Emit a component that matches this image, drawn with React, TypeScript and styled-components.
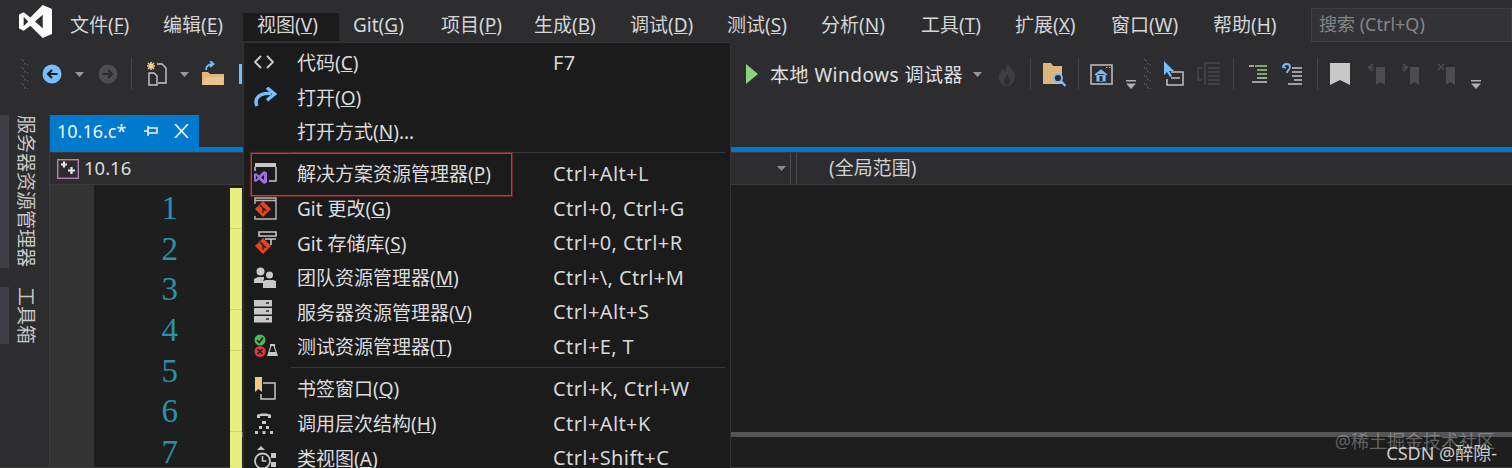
import React from 'react';
import styled, {createGlobalStyle} from 'styled-components';

const GlobalStyle = createGlobalStyle`
  html, body {
    margin: 0;
    padding: 0;
    background: #2d2d30;
  }
`

const Page = styled.div`
  width: 1512px;
  height: 468px;
  position: relative;
  overflow: hidden;
  display: flex;
  flex-direction: column;
  background: #2d2d30;
  color: #dcdcdc;
  font-family: "Noto Sans", "Noto Sans CJK SC", sans-serif;
  font-size: 19px;
`

const MenuBar = styled.div`
  height: 42px;
  flex: none;
  display: flex;
  align-items: center;
  padding-left: 19px;
`
const Logo = styled.svg`
  width: 33px;
  height: 33px;
  margin-right: 4px;
`
const TopItem = styled.div<{ $w: number; $active?: boolean }>`
  width: ${p => p.$w}px;
  height: 28px;
  margin-top: 12px;
  padding-left: 14px;
  box-sizing: border-box;
  line-height: 24px;
  white-space: nowrap;
  color: #d6d6d6;
  background: ${p => (p.$active ? '#1b1b1c' : 'transparent')};
`
const SearchBox = styled.div`
  width: 201px;
  height: 34px;
  margin: 8px 0 0 auto;
  padding-left: 7px;
  box-sizing: border-box;
  background: #333337;
  border: 1px solid #3f3f43;
  color: #858585;
  font-size: 18px;
  line-height: 31px;
  white-space: nowrap;
`

const Toolbar = styled.div`
  height: 73px;
  flex: none;
  display: flex;
  align-items: flex-start;
  padding: 8px 0 0 20px;
  box-sizing: border-box;
`
const Tool = styled.div<{ $ml?: number; $w: number }>`
  flex: none;
  height: 48px;
  width: ${p => p.$w}px;
  margin-left: ${p => p.$ml ?? 0}px;
  display: flex;
  align-items: center;
  justify-content: center;
  white-space: nowrap;
`
const OverflowTool = styled(Tool)`
  align-items: flex-end;
  padding-bottom: 9px;
  box-sizing: border-box;
`
const ToolSep = styled.div<{ $ml: number }>`
  flex: none;
  width: 1px;
  height: 32px;
  margin: 8px 0 0 ${p => p.$ml}px;
  background: #46464a;
`
const RunLabel = styled(Tool)`
  justify-content: flex-start;
  color: #e0e0e0;
  letter-spacing: .5px;
`
const CutOffBar = styled.div`
  width: 3px;
  height: 20px;
  background: #75beff;
`

const Body = styled.div`
  flex: 1;
  min-height: 0;
  display: flex;
  border-bottom: 1px solid #3c3c3c;
`
const Rail = styled.div`
  width: 50px;
  flex: none;
  display: flex;
  flex-direction: column;
  align-items: flex-start;
  gap: 19px;
  border-right: 1px solid #3a3a3d;
  box-sizing: border-box;
`
const RailTab = styled.div<{ $h: number }>`
  height: ${p => p.$h}px;
  width: 21px;
  border-left: 9px solid #3f3f46;
  padding-left: 6px;
  font-size: 19px;
  line-height: 21px;
  writing-mode: vertical-rl;
  text-orientation: sideways;
  color: #c8c8c8;
  white-space: nowrap;
`

const Main = styled.div`
  flex: 1;
  min-width: 0;
  display: flex;
  flex-direction: column;
`
const TabStrip = styled.div`
  height: 37px;
  flex: none;
  display: flex;
  flex-direction: column;
`
const DocTab = styled.div`
  width: 149px;
  height: 32px;
  flex: none;
  background: #007acc;
  display: flex;
  align-items: center;
  padding-left: 7px;
  box-sizing: border-box;
  color: #f0f6fb;
  font-size: 18px;
`
const DocTabIcons = styled.div`
  display: flex;
  align-items: center;
  gap: 16px;
  margin-left: 18px;
`
const BlueLine = styled.div`
  height: 5px;
  flex: none;
  background: #007acc;
`
const NavRow = styled.div`
  height: 33px;
  flex: none;
  display: flex;
  border-top: 1px solid #3a3a3d;
  border-bottom: 1px solid #3a3a3d;
  box-sizing: border-box;
`
const NavCell = styled.div<{ $w?: number }>`
  ${p => (p.$w ? `width: ${p.$w}px;` : 'flex: 1;')}
  flex-shrink: 0;
  display: flex;
  align-items: center;
  box-sizing: border-box;
`
const NavMember = styled(NavCell)`
  padding-left: 7px;
  gap: 5px;
  border-right: 1px solid #4a4a4d;
`
const NavScope = styled(NavCell)`
  margin-left: 5px;
  padding: 0 0 3px 32px;
  border-left: 1px solid #4a4a4d;
  color: #d0d0d0;
`
const NavName = styled.span`
  font-size: 18.5px;
  padding-bottom: 2px;
`
const NavCaret = styled.div`
  margin-left: auto;
  margin-right: 4px;
  display: flex;
`

const Editor = styled.div`
  flex: 1;
  min-height: 0;
  display: flex;
  background: #1e1e1e;
`
const Margin = styled.div`
  width: 44px;
  flex: none;
  background: #333333;
`
const Lines = styled.div`
  width: 148px;
  flex: none;
  padding-top: 3px;
`
const LineRow = styled.div`
  height: 40.7px;
  display: grid;
  grid-template-columns: 136px 12px;
`
const LineNo = styled.div`
  padding-right: 52px;
  text-align: right;
  font-family: "Liberation Serif", serif;
  font-size: 33px;
  line-height: 41px;
  color: #2b91af;
`
const Changed = styled.div`
  background: #e6ee7d;
  border-bottom: 1px solid #cdd46e;
`
const CodeArea = styled.div`
  flex: 1;
  padding-top: 247px;
`
const HScroll = styled.div`
  height: 5px;
  background: #555558;
`

const Dropdown = styled.div`
  position: absolute;
  left: 243px;
  top: 42px;
  width: 488px;
  height: 440px;
  padding-top: 2px;
  box-sizing: border-box;
  background: #1b1b1c;
  border-left: 1px solid #333337;
  border-right: 1px solid #333337;
  border-top: 1px solid #333337;
`
const MenuRow = styled.div`
  position: relative;
  height: 34.6px;
  display: flex;
  align-items: center;
  white-space: nowrap;
  color: #dcdcdc;
`
const RowIcon = styled.div`
  width: 53px;
  flex: none;
  display: flex;
  justify-content: flex-start;
  padding-left: 10px;
  box-sizing: border-box;
`
const RowLabel = styled.div`
  width: 256px;
  flex: none;
`
const RowKeys = styled.div`
  color: #d8d8d8;
  font-size: 20px;
  letter-spacing: .4px;
`
const MenuSep = styled.div`
  height: 1px;
  margin: 3px 5px 3.4px 47px;
  background: #3a3a3c;
`
const RedBox = styled.div`
  position: absolute;
  left: 7px;
  top: -3px;
  width: 261px;
  height: 43px;
  border: 1px solid #c83a3a;
  box-shadow: 0 0 1px 1px rgba(170, 40, 40, .55);
  box-sizing: border-box;
`
const Watermark = styled.div<{ $right: number; $top: number; $strong?: boolean }>`
  position: absolute;
  right: ${p => p.$right}px;
  top: ${p => p.$top}px;
  white-space: nowrap;
  font-size: 18px;
  line-height: 24px;
  color: ${p => (p.$strong ? 'rgba(235,235,235,.85)' : 'rgba(200,200,200,.42)')};
`

const Caret = ({color = '#9a9a9a'}: { color?: string }) => (
    <svg width="9" height="5" viewBox="0 0 9 5"><path d="M0 0h9L4.5 5z" fill={color}/></svg>
);

const Gripper = () => (
    <svg width="8" height="30" viewBox="0 0 8 30">
        {[0, 1, 2, 3, 4, 5, 6, 7].map(i => (
            <g key={i} fill="#5a5a5e">
                <rect x={i % 2 ? 4 : 1} y={i * 4} width="1.6" height="1.6"/>
                <rect x={i % 2 ? 7 : 3} y={i * 4 + 1} width="1" height="1.4"/>
            </g>
        ))}
    </svg>
);

const NavCircle = ({fill, glyph, flip}: { fill: string; glyph: string; flip?: boolean }) => (
    <svg width="20" height="20" viewBox="0 0 20 20">
        <circle cx="10" cy="10" r="9.5" fill={fill}/>
        <path d={flip ? 'M4.5 10h9M10 6l4 4-4 4' : 'M15.5 10h-9M10 6l-4 4 4 4'} fill="none" stroke={glyph} strokeWidth="2.2"/>
    </svg>
);

const NewProject = () => (
    <svg width="22" height="26" viewBox="0 0 22 26">
        <path d="M5 1v8M1 5h8M2 2l6 6M8 2L2 8" stroke="#f0cf8f" strokeWidth="1.6"/>
        <path d="M11 3h5l4 4v15h-8" fill="none" stroke="#c8c8c8" strokeWidth="1.4"/>
        <path d="M3 12h5l3 3v9H3z" fill="#2d2d30" stroke="#c8c8c8" strokeWidth="1.4"/>
    </svg>
);

const OpenFolder = () => (
    <svg width="24" height="26" viewBox="0 0 24 26">
        <path d="M5 9c0-4 3-6 7-6M9 0l3.500 3-3.500 3" fill="none" stroke="#75beff" strokeWidth="1.800"/>
        <path d="M1 11h6l2 2h14v11H1z" fill="#dcb67a"/>
        <path d="M1 24l3-8h19l-1 8z" fill="#e8c48a"/>
    </svg>
);

const Flame = () => (
    <svg width="18" height="24" viewBox="0 0 18 24">
        <path d="M9 0c1 5 8 8 8 15 0 5-4 9-8 9s-8-4-8-9c0-4 3-5 4-9 1 2 2 3 2 4 1-3 2-6 2-10z" fill="#3f3f41"/>
        <path d="M9 12c1 3 3 4 3 7 0 2-1 4-3 4s-3-2-3-4c0-3 2-4 3-7z" fill="#2d2d30"/>
    </svg>
);

const FolderSearch = () => (
    <svg width="25" height="27" viewBox="0 0 25 27">
        <path d="M1 2h8l2 3h9v18H1z" fill="#dcb67a"/>
        <circle cx="16" cy="17" r="4" fill="#2d2d30" stroke="#75beff" strokeWidth="1.800"/>
        <path d="M19 20l4.500 5" stroke="#75beff" strokeWidth="2.200"/>
    </svg>
);

const HomeWindow = () => (
    <svg width="23" height="21" viewBox="0 0 23 21">
        <rect x="1" y="1" width="21" height="19" fill="none" stroke="#b8b8b8" strokeWidth="1.600"/>
        <path d="M5 11l6-5 6 5M7 10v7h8v-7" fill="#75beff" stroke="#75beff" strokeWidth="1.200"/>
        <rect x="9.500" y="12" width="3" height="5" fill="#2d2d30"/>
        <path d="M16 3.500h1.500M19 3.500h1.500" stroke="#b8b8b8" strokeWidth="1.200"/>
    </svg>
);

const Overflow = () => (
    <svg width="10" height="9" viewBox="0 0 10 9">
        <path d="M0 0h10v1.400H0zM0 3.500h10L5 9z" fill="#b0b0b0"/>
    </svg>
);

const CursorBox = () => (
    <svg width="21" height="26" viewBox="0 0 21 26">
        <path d="M1 0v14l3-3 3 5 2-1-3-5h5z" fill="#75beff"/>
        <path d="M8 11h12v13H4v-6" fill="none" stroke="#c0c0c0" strokeWidth="1.500"/>
        <path d="M8 17h9" stroke="#c0c0c0" strokeWidth="1.500"/>
    </svg>
);

const DisabledList = () => (
    <svg width="24" height="24" viewBox="0 0 24 24">
        <path d="M5 6H1v12h4M8 1v22M8 1h15M11 6h12M11 10h12M11 14h12M11 18h12M11 22h12" fill="none" stroke="#4a4a4d" strokeWidth="1.400"/>
    </svg>
);

const IndentGreen = () => (
    <svg width="19" height="20" viewBox="0 0 19 20">
        <path d="M0 2h5" stroke="#c8c8c8" strokeWidth="1.500"/>
        <path d="M6 2h12M8 6h10M8 10h10" stroke="#9ad08a" strokeWidth="1.500"/>
        <path d="M8 14h10" stroke="#c8c8c8" strokeWidth="1.500"/>
        <path d="M3 18h15" stroke="#c8c8c8" strokeWidth="1.500"/>
    </svg>
);

const QuestionList = () => (
    <svg width="21" height="22" viewBox="0 0 21 22">
        <path d="M1 4c0-4 7-4 7 0 0 3-3 3-3 6" fill="none" stroke="#75beff" strokeWidth="1.800"/>
        <path d="M3 1l-2 3 3 1" fill="none" stroke="#75beff" strokeWidth="1.500"/>
        <path d="M10 5h10M10 9h10M10 13h10M12 17h8M6 21h14" stroke="#c8c8c8" strokeWidth="1.500"/>
    </svg>
);

const Bookmark = ({color, mark}: { color: string; mark?: string }) => (
    <svg width="20" height="22" viewBox="0 0 20 22">
        <path d={mark ? 'M9 4h9v18l-4.500-3-4.500 3z' : 'M0 0h20v22l-10-5-10 5z'} fill={color}/>
        {mark && <path d={mark} fill="none" stroke={color} strokeWidth="1.600"/>}
    </svg>
);

const Pin = () => (
    <svg width="14" height="12" viewBox="0 0 14 12">
        <path d="M0 6h4M4 1v10M4 3h9v5H4" fill="none" stroke="#eaf4fb" strokeWidth="1.600"/>
    </svg>
);

const CloseX = () => (
    <svg width="15" height="14" viewBox="0 0 15 14">
        <path d="M1 0l13 14M14 0L1 14" stroke="#eaf4fb" strokeWidth="1.700"/>
    </svg>
);

const TreeIcon = () => (
    <svg width="22" height="20" viewBox="0 0 22 20">
        <rect x=".7" y=".7" width="20.600" height="18.600" fill="none" stroke="#b780b0" strokeWidth="1.400"/>
        <path d="M4 5.500h6M7 2.500v6M11 11.500h7M14.500 8v7" stroke="#e8e8e8" strokeWidth="2.200"/>
    </svg>
);

const CodeIcon = () => (
    <svg width="20" height="14" viewBox="0 0 20 14">
        <path d="M7 1L1 7l6 6M13 1l6 6-6 6" fill="none" stroke="#d0d0d0" strokeWidth="1.800"/>
    </svg>
);

const RedoIcon = () => (
    <svg width="23" height="20" viewBox="0 0 23 20">
        <path d="M3 19C-.5 11 6 5.500 17 6.500" fill="none" stroke="#75beff" strokeWidth="3.400"/>
        <path d="M13 .8l7.500 6.200-7.500 6.200" fill="none" stroke="#75beff" strokeWidth="3.400"/>
    </svg>
);

const VsMark = ({x = 0, y = 9}: { x?: number; y?: number }) => (
    <g transform={`translate(${x} ${y})`}>
        <path d="M0 3l2-1 3 2.500L10 0l3 1.500v10L10 13 5 8.500 2 11l-2-1zM2 4.500v4L4 6.500zM10 4L7 6.500 10 9z" fill="#9b6fe0" fillRule="evenodd"/>
    </g>
);

const SolutionIcon = () => (
    <svg width="23" height="23" viewBox="0 0 23 23">
        <path d="M1 1h21v4H1z" fill="#c8c8c8"/>
        <path d="M1 5v4M22 5v14h-7" fill="none" stroke="#c8c8c8" strokeWidth="1.500"/>
        <VsMark x={0} y={9}/>
    </svg>
);

const GitDiamond = ({x, y}: { x: number; y: number }) => (
    <g transform={`translate(${x} ${y})`}>
        <path d="M8 0l8 8-8 8-8-8z" fill="#e5421f"/>
        <path d="M5 4l6 6M8 7v5" stroke="#1b1b1c" strokeWidth="1.200"/>
    </g>
);

const GitChangeIcon = () => (
    <svg width="23" height="23" viewBox="0 0 23 23">
        <path d="M1 1h21v2.500H1zM1 3v4M22 3v19H1v-3" fill="none" stroke="#b8b8b8" strokeWidth="1.400"/>
        <GitDiamond x={1} y={4}/>
    </svg>
);

const GitRepoIcon = () => (
    <svg width="23" height="23" viewBox="0 0 23 23">
        <path d="M5 1h17v4H5zM11 8h11M17 8v6" fill="none" stroke="#c8c8c8" strokeWidth="1.600"/>
        <GitDiamond x={1} y={7}/>
    </svg>
);

const TeamIcon = () => (
    <svg width="22" height="21" viewBox="0 0 22 21">
        <circle cx="6.500" cy="4.500" r="4" fill="#c8c8c8"/>
        <circle cx="15.500" cy="8" r="3.500" fill="#c8c8c8"/>
        <path d="M0 16v-4l4-2h6v2l-1 2v2z" fill="#c8c8c8"/>
        <path d="M9 21v-7l3-1h7l3 1v7z" fill="#c8c8c8"/>
    </svg>
);

const ServerIcon = () => (
    <svg width="18" height="23" viewBox="0 0 18 23">
        <path d="M0 0h18v6.500H0zM0 8h18v6.500H0zM0 16h18v6.500H0z" fill="#c8c8c8"/>
        <path d="M12 3h3M12 11h3M12 19h3" stroke="#2d2d30" strokeWidth="1.400"/>
    </svg>
);

const TestIcon = () => (
    <svg width="24" height="24" viewBox="0 0 24 24">
        <path d="M15 10h7M16 10h5v3l3 9H13l3-9z" fill="#c8c8c8"/>
        <path d="M17.500 12h2l2 6h-6z" fill="#1b1b1c"/>
        <circle cx="6" cy="6" r="5.500" fill="#4cb85c"/>
        <path d="M3 6l2.200 2.500L9 3.500" fill="none" stroke="#1b1b1c" strokeWidth="1.500"/>
        <circle cx="6" cy="17.500" r="5.500" fill="#e03a3a"/>
        <path d="M3.500 15l5 5M8.500 15l-5 5" stroke="#1b1b1c" strokeWidth="1.500"/>
    </svg>
);

const BookmarkWindowIcon = () => (
    <svg width="22" height="23" viewBox="0 0 22 23">
        <path d="M1 0h7v15l-3.500-3L1 15z" fill="#f2c88a"/>
        <path d="M9 6h12v16H7v-5" fill="none" stroke="#c8c8c8" strokeWidth="1.500"/>
    </svg>
);

const CallIcon = () => (
    <svg width="20" height="22" viewBox="0 0 20 22">
        <path d="M3 6V3c2-2 12-2 14 0v3h-3V4H6v2z" fill="#c8c8c8"/>
        <path d="M8 9h4v3H8zM5 14h3v3H5zM12 14h3v3h-3zM1 19h3v3H1zM8.500 19h3v3h-3zM16 19h3v3h-3z" fill="#c8c8c8"/>
    </svg>
);

const ClassIcon = () => (
    <svg width="23" height="24" viewBox="0 0 23 24">
        <path d="M7 0l4 4H3z" fill="#c8c8c8"/>
        <circle cx="8.500" cy="15" r="7.500" fill="none" stroke="#c8c8c8" strokeWidth="1.800"/>
        <path d="M8.500 10v5h4" fill="none" stroke="#c8c8c8" strokeWidth="1.600"/>
        <path d="M17 7h5v5h-5zM17 16h5v5h-5z" fill="#c8c8c8"/>
    </svg>
);

const topItems = [
    {w: 93, name: '文件', key: 'F'},
    {w: 94, name: '编辑', key: 'E'},
    {w: 96, name: '视图', key: 'V', active: true},
    {w: 88, name: 'Git', key: 'G'},
    {w: 93, name: '项目', key: 'P'},
    {w: 96, name: '生成', key: 'B'},
    {w: 97, name: '调试', key: 'D'},
    {w: 94, name: '测试', key: 'S'},
    {w: 100, name: '分析', key: 'N'},
    {w: 94, name: '工具', key: 'T'},
    {w: 96, name: '扩展', key: 'X'},
    {w: 102, name: '窗口', key: 'W'},
    {w: 85, name: '帮助', key: 'H'},
];

type Row = { icon?: React.ReactNode; name: string; key?: string; tail?: string; keys?: string; boxed?: boolean };

const groups: Row[][] = [
    [
        {icon: <CodeIcon/>, name: '代码', key: 'C', keys: 'F7'},
        {icon: <RedoIcon/>, name: '打开', key: 'O'},
        {name: '打开方式', key: 'N', tail: '...'},
    ],
    [
        {icon: <SolutionIcon/>, name: '解决方案资源管理器', key: 'P', keys: 'Ctrl+Alt+L', boxed: true},
        {icon: <GitChangeIcon/>, name: 'Git 更改', key: 'G', keys: 'Ctrl+0, Ctrl+G'},
        {icon: <GitRepoIcon/>, name: 'Git 存储库', key: 'S', keys: 'Ctrl+0, Ctrl+R'},
        {icon: <TeamIcon/>, name: '团队资源管理器', key: 'M', keys: 'Ctrl+\\, Ctrl+M'},
        {icon: <ServerIcon/>, name: '服务器资源管理器', key: 'V', keys: 'Ctrl+Alt+S'},
        {icon: <TestIcon/>, name: '测试资源管理器', key: 'T', keys: 'Ctrl+E, T'},
    ],
    [
        {icon: <BookmarkWindowIcon/>, name: '书签窗口', key: 'Q', keys: 'Ctrl+K, Ctrl+W'},
        {icon: <CallIcon/>, name: '调用层次结构', key: 'H', keys: 'Ctrl+Alt+K'},
        {icon: <ClassIcon/>, name: '类视图', key: 'A', keys: 'Ctrl+Shift+C'},
    ],
];

const App = () => {
    return (
        <Page>
            <GlobalStyle/>
            <MenuBar>
                <Logo viewBox="0 0 32 32">
                    <path
                        d="M23 0l9 3.800v24.400L23 32 11 20l-6.500 5L0 22.800V9.200L4.500 7 11 12zM4.500 11.500v9L9 16zM23 9.500L15.500 16l7.500 6.500z"
                        fill="#ffffff" fillRule="evenodd"/>
                </Logo>
                {topItems.map(item => (
                    <TopItem key={item.key + item.name} $w={item.w} $active={item.active}>
                        {item.name}(<u>{item.key}</u>)
                    </TopItem>
                ))}
                <SearchBox>搜索 (Ctrl+Q)</SearchBox>
            </MenuBar>

            <Toolbar>
                <Tool $w={8}><Gripper/></Tool>
                <Tool $ml={14} $w={20}><NavCircle fill="#75beff" glyph="#1e1e1e"/></Tool>
                <Tool $ml={13} $w={9}><Caret/></Tool>
                <Tool $ml={14} $w={20}><NavCircle fill="#4d4d50" glyph="#2d2d30" flip/></Tool>
                <ToolSep $ml={13}/>
                <Tool $ml={14} $w={22}><NewProject/></Tool>
                <Tool $ml={12} $w={9}><Caret/></Tool>
                <Tool $ml={12} $w={24}><OpenFolder/></Tool>
                <Tool $ml={13} $w={5}><CutOffBar/></Tool>
                <Tool $ml={503} $w={12}>
                    <svg width="12" height="20" viewBox="0 0 12 20"><path d="M0 0l12 10L0 20z" fill="#89d185"/></svg>
                </Tool>
                <RunLabel $ml={12} $w={191}>本地 Windows 调试器</RunLabel>
                <Tool $ml={12} $w={9}><Caret/></Tool>
                <Tool $ml={16} $w={18}><Flame/></Tool>
                <ToolSep $ml={14}/>
                <Tool $ml={11} $w={25}><FolderSearch/></Tool>
                <ToolSep $ml={11}/>
                <Tool $ml={11} $w={23}><HomeWindow/></Tool>
                <OverflowTool $ml={12} $w={11}><Overflow/></OverflowTool>
                <Tool $ml={7} $w={8}><Gripper/></Tool>
                <Tool $ml={12} $w={21}><CursorBox/></Tool>
                <Tool $ml={13} $w={24}><DisabledList/></Tool>
                <ToolSep $ml={12}/>
                <Tool $ml={15} $w={19}><IndentGreen/></Tool>
                <Tool $ml={14} $w={21}><QuestionList/></Tool>
                <ToolSep $ml={14}/>
                <Tool $ml={12} $w={20}><Bookmark color="#c8c8c8"/></Tool>
                <Tool $ml={17} $w={20}><Bookmark color="#4d4d50" mark="M6 1L1.500 4.500 6 8M2 4.500h5"/></Tool>
                <Tool $ml={14} $w={20}><Bookmark color="#4d4d50" mark="M2 1l4.500 3.500L2 8M6 4.500H1"/></Tool>
                <Tool $ml={16} $w={20}><Bookmark color="#4d4d50" mark="M1 1l6 6M7 1L1 7"/></Tool>
                <OverflowTool $ml={13} $w={11}><Overflow/></OverflowTool>
            </Toolbar>

            <Body>
                <Rail>
                    <RailTab $h={153}>服务器资源管理器</RailTab>
                    <RailTab $h={57}>工具箱</RailTab>
                </Rail>
                <Main>
                    <TabStrip>
                        <DocTab>
                            10.16.c*
                            <DocTabIcons>
                                <Pin/>
                                <CloseX/>
                            </DocTabIcons>
                        </DocTab>
                        <BlueLine/>
                    </TabStrip>
                    <NavRow>
                        <NavMember $w={741}>
                            <TreeIcon/>
                            <NavName>10.16</NavName>
                            <NavCaret><Caret color="#8a8a8a"/></NavCaret>
                        </NavMember>
                        <NavScope>(全局范围)</NavScope>
                    </NavRow>
                    <Editor>
                        <Margin/>
                        <Lines>
                            {[1, 2, 3, 4, 5, 6, 7].map(n => (
                                <LineRow key={n}>
                                    <LineNo>{n}</LineNo>
                                    <Changed/>
                                </LineRow>
                            ))}
                        </Lines>
                        <CodeArea>
                            <HScroll/>
                        </CodeArea>
                    </Editor>
                </Main>
            </Body>

            <Dropdown>
                {groups.map((group, i) => (
                    <React.Fragment key={i}>
                        {i > 0 && <MenuSep/>}
                        {group.map(row => (
                            <MenuRow key={row.name}>
                                <RowIcon>{row.icon}</RowIcon>
                                <RowLabel>
                                    {row.name}(<u>{row.key}</u>){row.tail}
                                </RowLabel>
                                <RowKeys>{row.keys}</RowKeys>
                                {row.boxed && <RedBox/>}
                            </MenuRow>
                        ))}
                    </React.Fragment>
                ))}
            </Dropdown>

            <Watermark $right={17} $top={429}>@稀土掘金技术社区</Watermark>
            <Watermark $right={15} $top={441} $strong>CSDN @醉隙-</Watermark>
        </Page>
    );
};

export default App;
